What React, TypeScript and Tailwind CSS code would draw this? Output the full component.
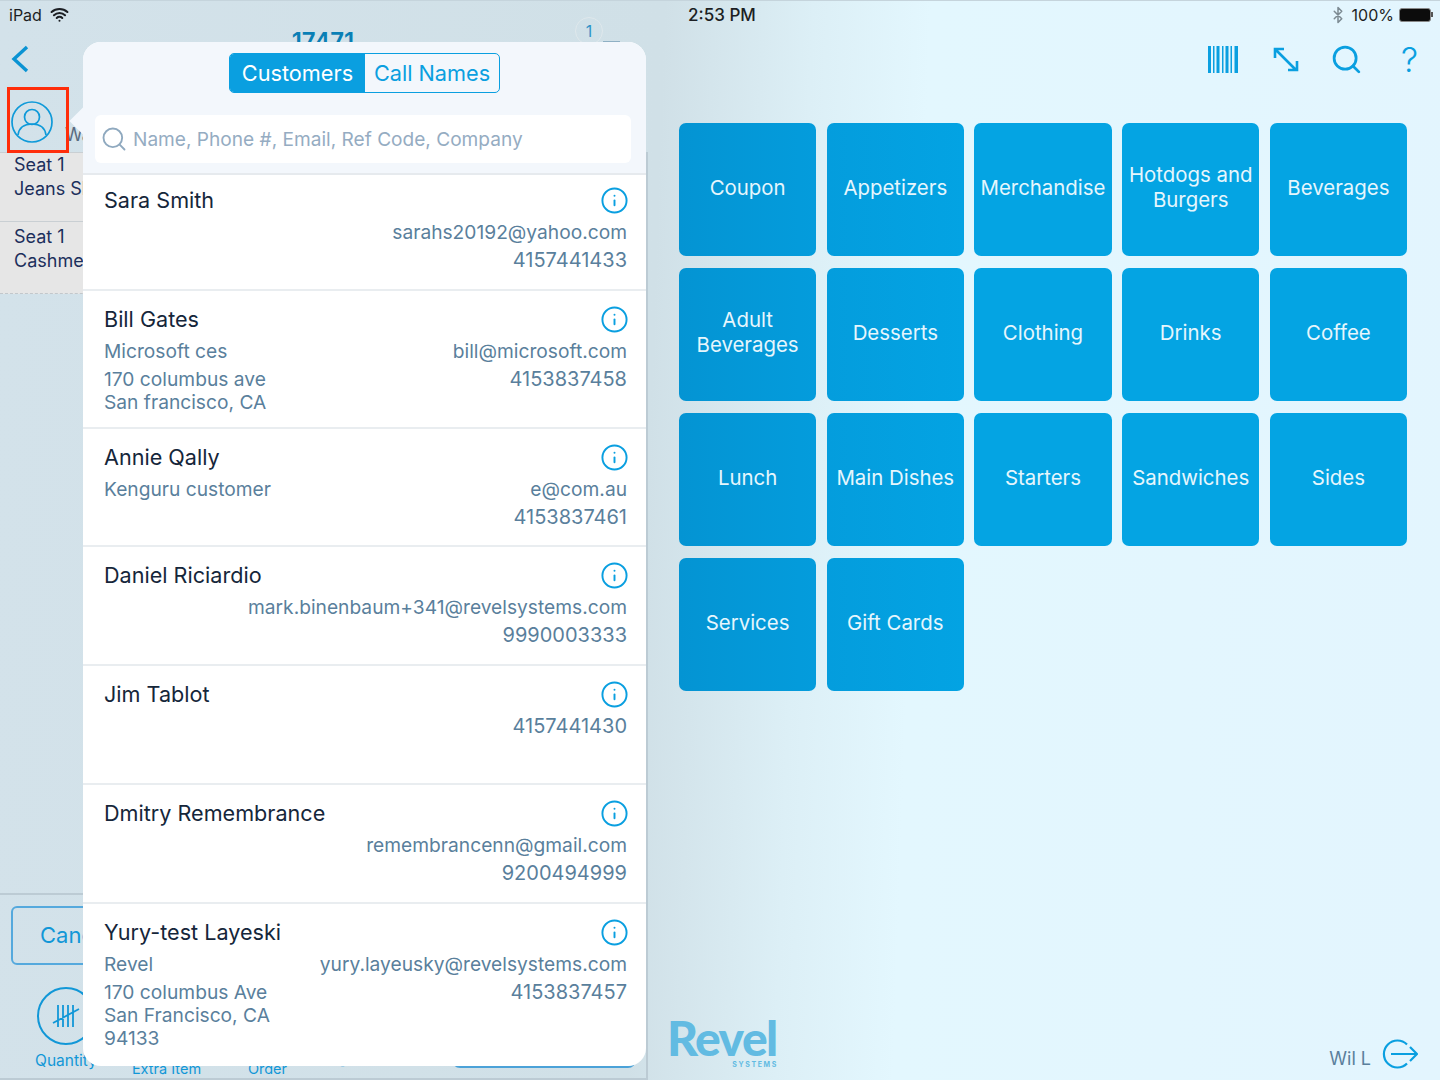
import { Bluetooth, Info, Search, Wifi } from 'lucide-react';

const customers = [
  { name: 'Sara Smith', email: 'sarahs20192@yahoo.com', phone: '4157441433', address: [], height: 'h-[116px] pt-[10px]' },
  { name: 'Bill Gates', company: 'Microsoft ces', email: 'bill@microsoft.com', phone: '4153837458', address: ['170 columbus ave', 'San francisco, CA'], height: 'h-[138px] pt-[13px]' },
  { name: 'Annie Qally', company: 'Kenguru customer', email: 'e@com.au', phone: '4153837461', address: [], height: 'h-[118px] pt-[13px]' },
  { name: 'Daniel Riciardio', email: 'mark.binenbaum+341@revelsystems.com', phone: '9990003333', address: [], height: 'h-[119px] pt-[13px]' },
  { name: 'Jim Tablot', phone: '4157441430', address: [], height: 'h-[119px] pt-[13px]' },
  { name: 'Dmitry Remembrance', email: 'remembrancenn@gmail.com', phone: '9200494999', address: [], height: 'h-[119px] pt-[13px]' },
  { name: 'Yury-test Layeski', company: 'Revel', email: 'yury.layeusky@revelsystems.com', phone: '4153837457', address: ['170 columbus Ave', 'San Francisco, CA', '94133'], height: 'h-[161px] pt-[13px]' },
];

// the first two columns sit on the darker part of the background
const col1 = 'bg-linear-to-r from-[#0494d3] to-[#049cdc]';
const col2 = 'bg-linear-to-r from-[#049ddd] to-[#03a3e3]';
const colRest = 'bg-[#04a4e3]';

const categories = [
  { label: ['Coupon'], color: col1 },
  { label: ['Appetizers'], color: col2 },
  { label: ['Merchandise'], color: colRest },
  { label: ['Hotdogs and', 'Burgers'], color: colRest },
  { label: ['Beverages'], color: colRest },
  { label: ['Adult', 'Beverages'], color: col1 },
  { label: ['Desserts'], color: col2 },
  { label: ['Clothing'], color: colRest },
  { label: ['Drinks'], color: colRest },
  { label: ['Coffee'], color: colRest },
  { label: ['Lunch'], color: col1 },
  { label: ['Main Dishes'], color: col2 },
  { label: ['Starters'], color: colRest },
  { label: ['Sandwiches'], color: colRest },
  { label: ['Sides'], color: colRest },
  { label: ['Services'], color: col1 },
  { label: ['Gift Cards'], color: col2 },
];

function StatusBar() {
  return (
    <div className="h-[28px] shrink-0 flex items-center justify-between pl-[9px] pr-[7px] border-t border-[#c5d4dc] text-[16px] text-[#1c1f24]">
      <div className="w-[300px] flex items-center gap-[8px]">
        iPad <Wifi size={19} strokeWidth={2.6} />
      </div>
      <div className="pt-[2px] pl-[2px] text-[17px] font-medium">2:53 PM</div>
      <div className="w-[300px] flex items-center justify-end">
        <Bluetooth size={18} className="text-[#7c8a92] mr-[5px]" />
        <span>100%</span>
        <div className="ml-[5px] w-[32px] h-[14px] rounded-[3px] bg-[#0c0c0c] border border-[#888]" />
        <div className="w-[2px] h-[5px] bg-[#555]" />
      </div>
    </div>
  );
}

function OrderPanel() {
  return (
    <div className="w-[648px] shrink-0 flex flex-col">
      {/* header, mostly behind the popover */}
      <div className="h-[124px] shrink-0 flex">
        <div className="w-[120px] pl-[11px] pt-[17px]">
          <svg width="18" height="28" viewBox="0 0 18 28" fill="none" stroke="#0a93d3" strokeWidth="3.4">
            <path d="M16 2 3 14l13 12" />
          </svg>
          <div className="mt-[28px] flex items-start">
            <svg width="42" height="42" viewBox="0 0 42 42" fill="none" stroke="#0f9ad9" strokeWidth="1.7">
              <circle cx="21" cy="21" r="20" />
              <circle cx="21" cy="16" r="7.5" />
              <path d="M7 34c1-7 6-11 14-11s13 4 14 11" />
            </svg>
            <span className="ml-[12px] mt-[20px] text-[18px] text-[#5a6b80]">Walk</span>
          </div>
        </div>
        <div className="w-[406px] text-center text-[24px] leading-[28px] font-semibold text-[#0a7fb5]">17471</div>
        <div className="-mt-[11px] ml-[49px] flex">
          <div className="w-[28px] h-[28px] rounded-full border border-[#dfe8ec] flex items-center justify-center text-[16px] text-[#2f93c8]">1</div>
          <div className="w-[17px] h-[2px] mt-[24px] bg-[#8fb0c4]" />
        </div>
      </div>

      <div className="flex-1 flex flex-col border-r-2 border-[#bccbd4]">
        <div className="h-[70px] bg-[#e6e6e6] border-y border-[#c9cfd3] pl-[14px] text-[18px] leading-[24px] text-[#1c2f5c]">
          <div>Seat 1</div>
          <div>Jeans Shirt</div>
        </div>
        <div className="h-[72px] bg-[#e6e6e6] border-b border-dashed border-[#c2c7cb] pl-[14px] pt-[3px] text-[18px] leading-[24px] text-[#1c2f5c]">
          <div>Seat 1</div>
          <div>Cashmere</div>
        </div>

        <div className="flex-1" />

        <div className="h-[187px] shrink-0 border-t-2 border-b-2 border-[#bccbd4]">
          <div className="mt-[11px] ml-[11px] w-[200px] h-[59px] rounded-[6px] border-2 border-[#55a9dd] pl-[27px] flex items-center text-[22px] text-[#1197d7]">
            Cancel
          </div>
          <div className="mt-[22px] pl-[16px] flex text-[#1197d7]">
            <div className="w-[100px] flex flex-col items-center">
              <div className="w-[58px] h-[58px] rounded-full border-2 border-[#1197d7] flex items-center justify-center">
                <svg width="28" height="28" viewBox="0 0 28 28" fill="none" stroke="#1197d7" strokeWidth="1.8">
                  <path d="M6 3v22M11 3v22M16 3v22M21 3v22M1 21 27 7" />
                </svg>
              </div>
              <div className="mt-[6px] text-[15.5px] leading-[20px]">Quantity</div>
            </div>
            <div className="w-[101px] pt-[72px] text-center text-[14.5px] leading-[20px]">Extra Item</div>
            <div className="w-[101px] pt-[72px] text-center text-[14.5px] leading-[20px]">Order</div>
            <div className="w-[102px] pt-[64px] text-center text-[15.5px] leading-[20px]">Services</div>
            <div className="ml-[32px] mt-[29px] w-[184px] h-[52px] rounded-[8px] border-2 border-[#4ba2d8]" />
          </div>
        </div>
      </div>
    </div>
  );
}

function MenuPanel() {
  return (
    <div className="flex-1 flex flex-col">
      <div className="h-[95px] shrink-0 flex items-start pt-[18px] text-[#0a9fe0]">
        <svg width="31" height="28" viewBox="0 0 31 28" fill="currentColor" className="ml-[560px]">
          <rect x="0" width="3" height="27" />
          <rect x="5" width="1.5" height="27" />
          <rect x="8.5" width="3" height="27" />
          <rect x="14" width="1.5" height="27" />
          <rect x="17.5" width="3" height="27" />
          <rect x="22.5" width="1.5" height="27" />
          <rect x="26.5" width="3.5" height="27" />
        </svg>
        <svg width="28" height="28" viewBox="0 0 28 28" fill="none" stroke="currentColor" strokeWidth="2.6" className="ml-[33px]">
          <path d="M3 3l21 21M3 12V3h9M25 15v9h-9" />
        </svg>
        <Search size={33} strokeWidth={2} className="ml-[30px] -mt-[3px]" />
        <div className="ml-[38px] -mt-[2px] text-[34px] leading-[32px] font-light">?</div>
      </div>

      <div className="ml-[31px] w-[728px] grid grid-cols-5 gap-x-[10.5px] gap-y-3">
        {categories.map(c => (
          <div key={c.label[0]} className={`h-[133px] pb-[5px] rounded-[7px] ${c.color} flex flex-col items-center justify-center text-[20.4px] leading-[25px] text-[#e6f6fd]`}>
            {c.label.map(line => <div key={line}>{line}</div>)}
          </div>
        ))}
      </div>

      <div className="flex-1" />

      <div className="h-[60px] shrink-0 flex items-start pl-[19px] pr-[22px] justify-between">
        <div className="-mt-[3px] text-[#62bbe2]">
          <div className="[font-family:Lato,sans-serif] text-[48px] leading-[42px] font-black tracking-[-1.5px]">Revel</div>
          <div className="mr-[-1px] text-[7px] leading-[10px] mt-[1px] font-bold tracking-[1.6px] text-right">SYSTEMS</div>
        </div>
        <div className="flex items-center pt-[15px]">
          <span className="text-[18px] text-[#5a7f9c] mt-[10px]">Wil L</span>
          <svg width="36" height="30" viewBox="0 0 36 30" fill="none" stroke="#0a9fe0" strokeWidth="2.2" className="ml-[11px]">
            <path d="M25 5.5A13.5 13.5 0 1 0 25 24.5M9 15h26M28 8l7 7-7 7" />
          </svg>
        </div>
      </div>
    </div>
  );
}

function CustomerPopover() {
  return (
    <div className="absolute left-[83px] top-[42px] w-[563px] h-[1024px] rounded-[18px] bg-white flex flex-col">
      {/* tail pointing at the avatar */}
      <div className="absolute left-[-9px] top-[68px] w-[22px] h-[22px] rotate-45 bg-[#f3f7fc]" />

      <div className="relative h-[133px] shrink-0 rounded-t-[18px] bg-[#f3f7fc] border-b-2 border-[#e6eaee] pl-[12px] pr-[15px]">
        <div className="mt-[11px] ml-[134px] w-[271px] h-[40px] flex rounded-[5px] border border-[#0a9fe0] overflow-hidden text-[21.7px]">
          <div className="w-[135px] bg-[#0a9fe0] text-white flex items-center justify-center">Customers</div>
          <div className="flex-1 text-[#0a9fe0] flex items-center justify-center">Call Names</div>
        </div>
        <div className="mt-[22px] h-[48px] rounded-[6px] bg-white flex items-center pl-[5px] text-[19.1px] text-[#95acc2]">
          <Search size={28} strokeWidth={1.6} className="text-[#8fa9bf]" />
          <span className="ml-[5px]">Name, Phone #, Email, Ref Code, Company</span>
        </div>
      </div>

      {customers.map((c, i) => (
        <div key={c.name} className={`${c.height} shrink-0 pl-[21px] pr-[19px] ${i < customers.length - 1 ? 'border-b-2 border-[#e9edf0]' : ''}`}>
          <div className="h-[30px] flex items-center justify-between text-[21.6px] text-[#15263a]">
            {c.name}
            <Info size={29} strokeWidth={1.6} className="text-[#0a9fe0] -mr-[2px]" />
          </div>
          <div className="mt-[3px] flex justify-between text-[19.2px] text-[#5a7f9c]">
            <div>
              {c.company && <div className="leading-[28px]">{c.company}</div>}
              {c.address.length > 0 && (
                <div className="mt-[3px] leading-[23px]">
                  {c.address.map(line => <div key={line}>{line}</div>)}
                </div>
              )}
            </div>
            <div className="text-right leading-[28px]">
              {c.email && <div>{c.email}</div>}
              <div className="text-[20px]">{c.phone}</div>
            </div>
          </div>
        </div>
      ))}
    </div>
  );
}

export default function App() {
  return (
    <div className="relative w-[1440px] h-[1080px] overflow-hidden flex flex-col [font-family:Inter,sans-serif] bg-[linear-gradient(92deg,#d3e2ea_0%,#d0e0e7_45%,#dceff6_55%,#e3f7fe_63%,#e3f5fe_100%)]">
      <StatusBar />
      <div className="flex-1 flex min-h-0">
        <OrderPanel />
        <MenuPanel />
      </div>
      <CustomerPopover />
      {/* red highlight round the customer button */}
      <div className="absolute left-[7px] top-[87px] w-[62px] h-[66px] border-[3px] border-[#ff2d0a]" />
    </div>
  );
}
